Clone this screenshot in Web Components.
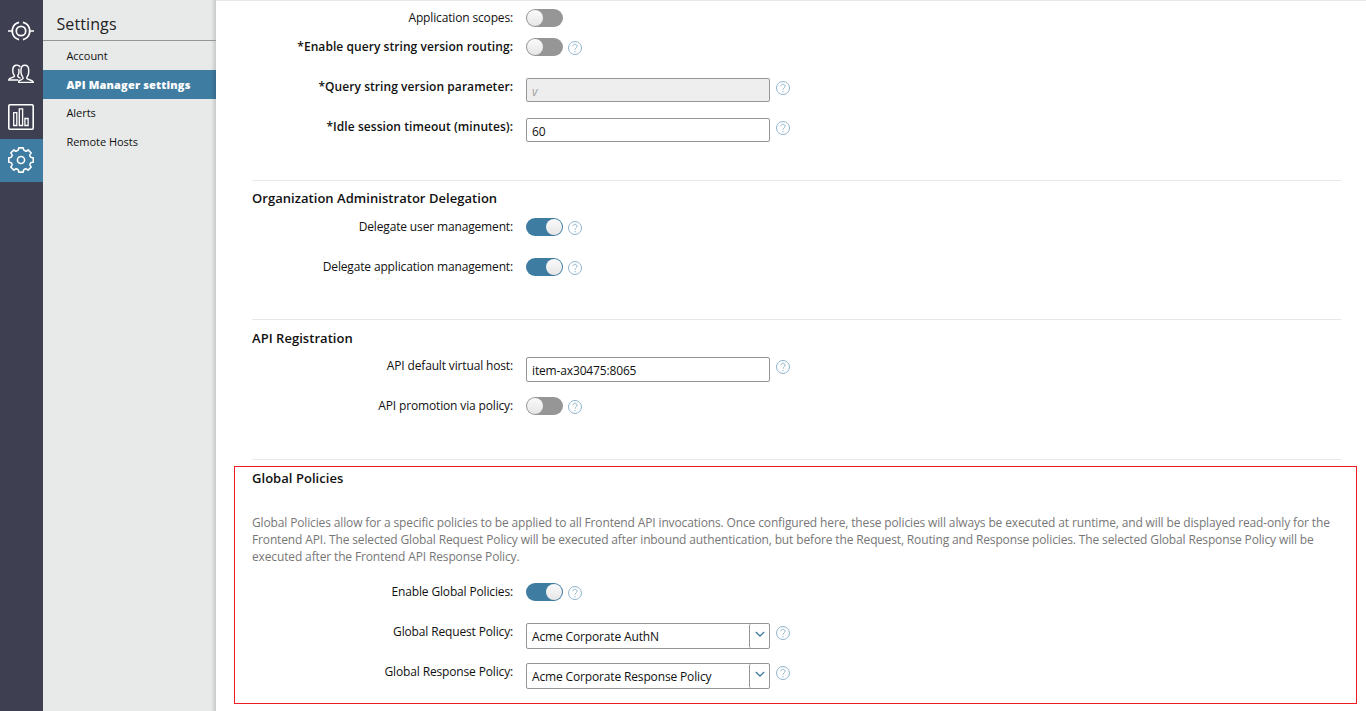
<!DOCTYPE html>
<html lang="en">
<head>
<meta charset="utf-8">
<title>API Manager settings</title>
<style>
html,body{margin:0;height:100%;overflow:hidden;background:#fff}
body{font:12px/19px "Open Sans","Noto Sans",sans-serif;color:#111}
</style>
</head>
<body>
<app-shell>
  <icon-rail slot="rail"></icon-rail>
  <side-nav slot="nav" heading="Settings">
    <nav-item>Account</nav-item>
    <nav-item selected>API Manager settings</nav-item>
    <nav-item>Alerts</nav-item>
    <nav-item>Remote Hosts</nav-item>
  </side-nav>
  <form-section class="first" style="height:171px">
    <form-row label="Application scopes:" style="height:29px"><toggle-switch></toggle-switch></form-row>
    <form-row strong label="*Enable query string version routing:"><toggle-switch></toggle-switch><help-icon></help-icon></form-row>
    <form-row strong label="*Query string version parameter:"><text-box disabled>v</text-box><help-icon></help-icon></form-row>
    <form-row strong label="*Idle session timeout (minutes):"><text-box>60</text-box><help-icon></help-icon></form-row>
  </form-section>
  <form-section divider heading="Organization Administrator Delegation" style="height:139px">
    <form-row label="Delegate user management:"><toggle-switch on></toggle-switch><help-icon></help-icon></form-row>
    <form-row label="Delegate application management:"><toggle-switch on></toggle-switch><help-icon></help-icon></form-row>
  </form-section>
  <form-section divider heading="API Registration" style="height:140px;--title-shift:1px">
    <form-row label="API default virtual host:"><text-box style="height:25px">item-ax30475:8065</text-box><help-icon></help-icon></form-row>
    <form-row label="API promotion via policy:"><toggle-switch></toggle-switch><help-icon></help-icon></form-row>
  </form-section>
  <form-section divider framed heading="Global Policies">
    <policy-note slot="note"><text-line>Global Policies allow for a specific policies to be applied to all Frontend API invocations. Once configured here, these policies will always be executed at runtime, and will be displayed read-only for the</text-line><text-line>Frontend API. The selected Global Request Policy will be executed after inbound authentication, but before the Request, Routing and Response policies. The selected Global Response Policy will be</text-line><text-line>executed after the Frontend API Response Policy.</text-line></policy-note>
    <form-row label="Enable Global Policies:"><toggle-switch on></toggle-switch><help-icon></help-icon></form-row>
    <form-row label="Global Request Policy:"><select-box>Acme Corporate AuthN</select-box><help-icon></help-icon></form-row>
    <form-row label="Global Response Policy:"><select-box>Acme Corporate Response Policy</select-box><help-icon></help-icon></form-row>
  </form-section>
</app-shell>
<script>
function define(name, html) {
  customElements.define(name, class extends HTMLElement {
    constructor() {
      super();
      const root = this.attachShadow({ mode: 'open' });
      root.innerHTML = html;
      root.querySelectorAll('[data-from]').forEach(el => {
        el.textContent = this.getAttribute(el.dataset.from) || '';
      });
    }
  });
}

define('app-shell', `<style>
:host{display:grid;grid-template-columns:43px 173px 1fr;height:711px;overflow:hidden}
main{box-sizing:border-box;border-top:1px solid #e8e8e8;padding:8px 9px 0 36px;min-width:0}
</style><slot name="rail"></slot><slot name="nav"></slot><main><slot></slot></main>`);

define('icon-rail', `<style>
:host{display:block;background:#3e4051;padding-top:10px}
div{box-sizing:border-box;height:43px;display:flex;align-items:center;justify-content:center;padding:0 1px 1px 0}
.on{background:#3f7ca1}
svg{display:block;fill:none;stroke:#fff;stroke-width:1.6}
</style>
<div><svg width="26" height="26" viewBox="0 0 27 27" style="stroke-width:1.8"><circle cx="13.500" cy="13.500" r="4.900"/><path d="M11.500 4.600A9.200 9.200 0 0 0 4.600 11.500M15.500 4.600a9.200 9.200 0 0 1 6.900 6.900M22.400 15.500a9.200 9.200 0 0 1-6.900 6.900M11.500 22.400a9.200 9.200 0 0 1-6.900-6.900M0 13.500h5.500M21.500 13.500H27M4.500 11.300v4.400M22.500 11.300v4.400"/></svg></div>
<div><svg width="26" height="20" viewBox="0 0 27 20" style="stroke-width:1.500"><path d="M11.200 18.700v-1.300c0-1.100 4.200-1.200 4.500-3.100.2-1.200-2.200-2.400-2.200-6.100V6c0-6.800 8-6.800 8 0v2.200c0 3.700-2.300 4.900-2.100 6.100.3 1.900 6.800 1.600 6.800 4.400z"/><path d="M12.700 2.800C10.800-.4 5 .2 5 5.300v2c0 3 1.900 3.900 1.700 5C6.300 14 .8 13.500.8 16.200h10M11 4.500c.6 1.500.5 5-.5 6.500-.8 1.200-.3 2.300 2.500 3.300"/></svg></div>
<div><svg width="26" height="26" viewBox="0 0 26 26"><rect x=".8" y=".8" width="24.400" height="24.400" rx="1.200"/><path stroke-width="1.300" d="M5.700 8.700h3.100v12.800H5.700zM11.300 4.800h3.300v16.700h-3.300zM16.900 14.500h3.200v7h-3.200z"/></svg></div>
<div class="on"><svg width="26" height="26" viewBox="0 0 27 27" stroke-linejoin="round"><circle cx="13.500" cy="13.500" r="3.700"/><path d="M11.200.9h4.600q0 2.800 2.700 3.400 1.200 0 2.400-1.300l3.200 3.200q-2 2-1.300 3.200.6 2 3.400 1.800v4.600q-2.800-.2-3.400 1.800-.7 1.200 1.300 3.200L20.900 24q-1.200-1.300-2.400-1.300-2.700.6-2.700 3.400h-4.600q0-2.800-2.700-3.400-1.200 0-2.400 1.300l-3.200-3.200q2-2 1.300-3.200-.6-2-3.400-1.800v-4.600q2.800.2 3.400-1.800.7-1.200-1.300-3.200L6.100 3q1.200 1.300 2.400 1.300 2.700-.6 2.700-3.400z"/></svg></div>`);

define('side-nav', `<style>
:host{display:block;background:linear-gradient(90deg,#0000 168px,#00000024 173px),#e8eaea}
h1{box-sizing:border-box;height:41px;margin:0;padding:13px 0 0 13.500px;border-bottom:1px solid #939597;font-size:16px;font-weight:400;line-height:22px;color:#222;letter-spacing:.1px}
nav{display:flex;flex-direction:column;padding-top:1px}
</style><h1><span data-from="heading"></span></h1><nav><slot></slot></nav>`);

define('nav-item', `<style>
:host{display:block;height:28px;line-height:28px;padding-left:23.400px;font-size:11px;white-space:nowrap;letter-spacing:-.03px}
:host(:last-child){padding-top:1px}
:host([selected]){background:linear-gradient(90deg,#0000 168px,#00000024 173px) 0 0/173px,#3f7ca1;color:#fff;font-weight:800;height:29px;line-height:29px;letter-spacing:.17px}
</style><slot></slot>`);

define('form-section', `<style>
:host{display:block;box-sizing:border-box}
:host([divider])::before{content:"";display:block;height:1px;background:#e7e7e7;margin-right:16px}
h2{margin:0;height:37px;padding-top:calc(8px + var(--title-shift,0px));box-sizing:border-box;font-size:13px;font-weight:600;line-height:19px;letter-spacing:.04px}
:host(:not([heading])) h2{display:none}
:host([framed]) .body{box-sizing:border-box;height:238px;margin:6px 0 0 -18px;padding-left:17px;border:1px solid #ed1c24}
:host([framed]) h2{height:47px;padding-top:2px}
</style><div class="body"><h2><span data-from="heading"></span></h2><slot name="note"></slot><slot></slot></div>`);

define('form-row', `<style>
:host{display:grid;grid-template-columns:261px auto;justify-content:start;align-items:start;height:40px;white-space:nowrap;letter-spacing:-.15px}
label{text-align:right;line-height:17px}
:host([strong]) label{font-weight:600;letter-spacing:.06px}
.field{display:flex;padding-left:13px}
</style><label><span data-from="label"></span></label><div class="field"><slot></slot></div>`);

define('toggle-switch', `<style>
:host{display:block;box-sizing:border-box;width:37px;height:18px;border-radius:9px;background:#969696;padding:1px;margin-right:5px}
i{display:block;width:16px;height:16px;border-radius:50%;background:linear-gradient(#fafafa,#e6e6e6)}
:host([on]){background:#3f7ca1}
:host([on]) i{margin-left:19px}
</style><i></i>`);

define('help-icon', `<style>
:host{display:block;width:14px;height:14px;margin-top:3px}
svg{display:block;fill:none;stroke:#8fb4cc;stroke-width:1}
</style><svg width="14" height="14" viewBox="0 0 14 14"><circle cx="7" cy="7" r="6.500"/><path d="M5 5.300c0-2.700 4-2.700 4 0C9 6.700 7 6.800 7 8.700M7 10v1.300"/></svg>`);

define('text-box', `<style>
:host{display:block;box-sizing:border-box;width:244px;height:24px;border:1px solid #969696;border-radius:2px;padding:3px 5px 0;margin-right:6px;background:#fff}
:host([disabled]){background:#eee;color:#a0a0a0;font-style:italic}
</style><slot></slot>`);

define('select-box', `<style>
:host{display:flex;box-sizing:border-box;width:244px;height:26px;border:1px solid #969696;border-radius:2px;margin-right:6px;background:#fff}
div{flex:1;padding:3px 5px 0}
b{width:19px;border-left:1px solid #969696;border-radius:2px 0 0 2px}
svg{display:block;margin:7px 0 0 5px;fill:none;stroke:#3f7ca1;stroke-width:1.300}
</style><div><slot></slot></div><b><svg width="10" height="7" viewBox="0 0 10 7"><path d="M.8 1 5 5l4.200-4"/></svg></b>`);

define('policy-note', `<style>
:host{display:block;height:69px;line-height:17px;color:#777;white-space:nowrap;letter-spacing:-.138px}
</style><slot></slot>`);
define('text-line', `<style>:host{display:block}</style><slot></slot>`);
</script>
</body>
</html>
